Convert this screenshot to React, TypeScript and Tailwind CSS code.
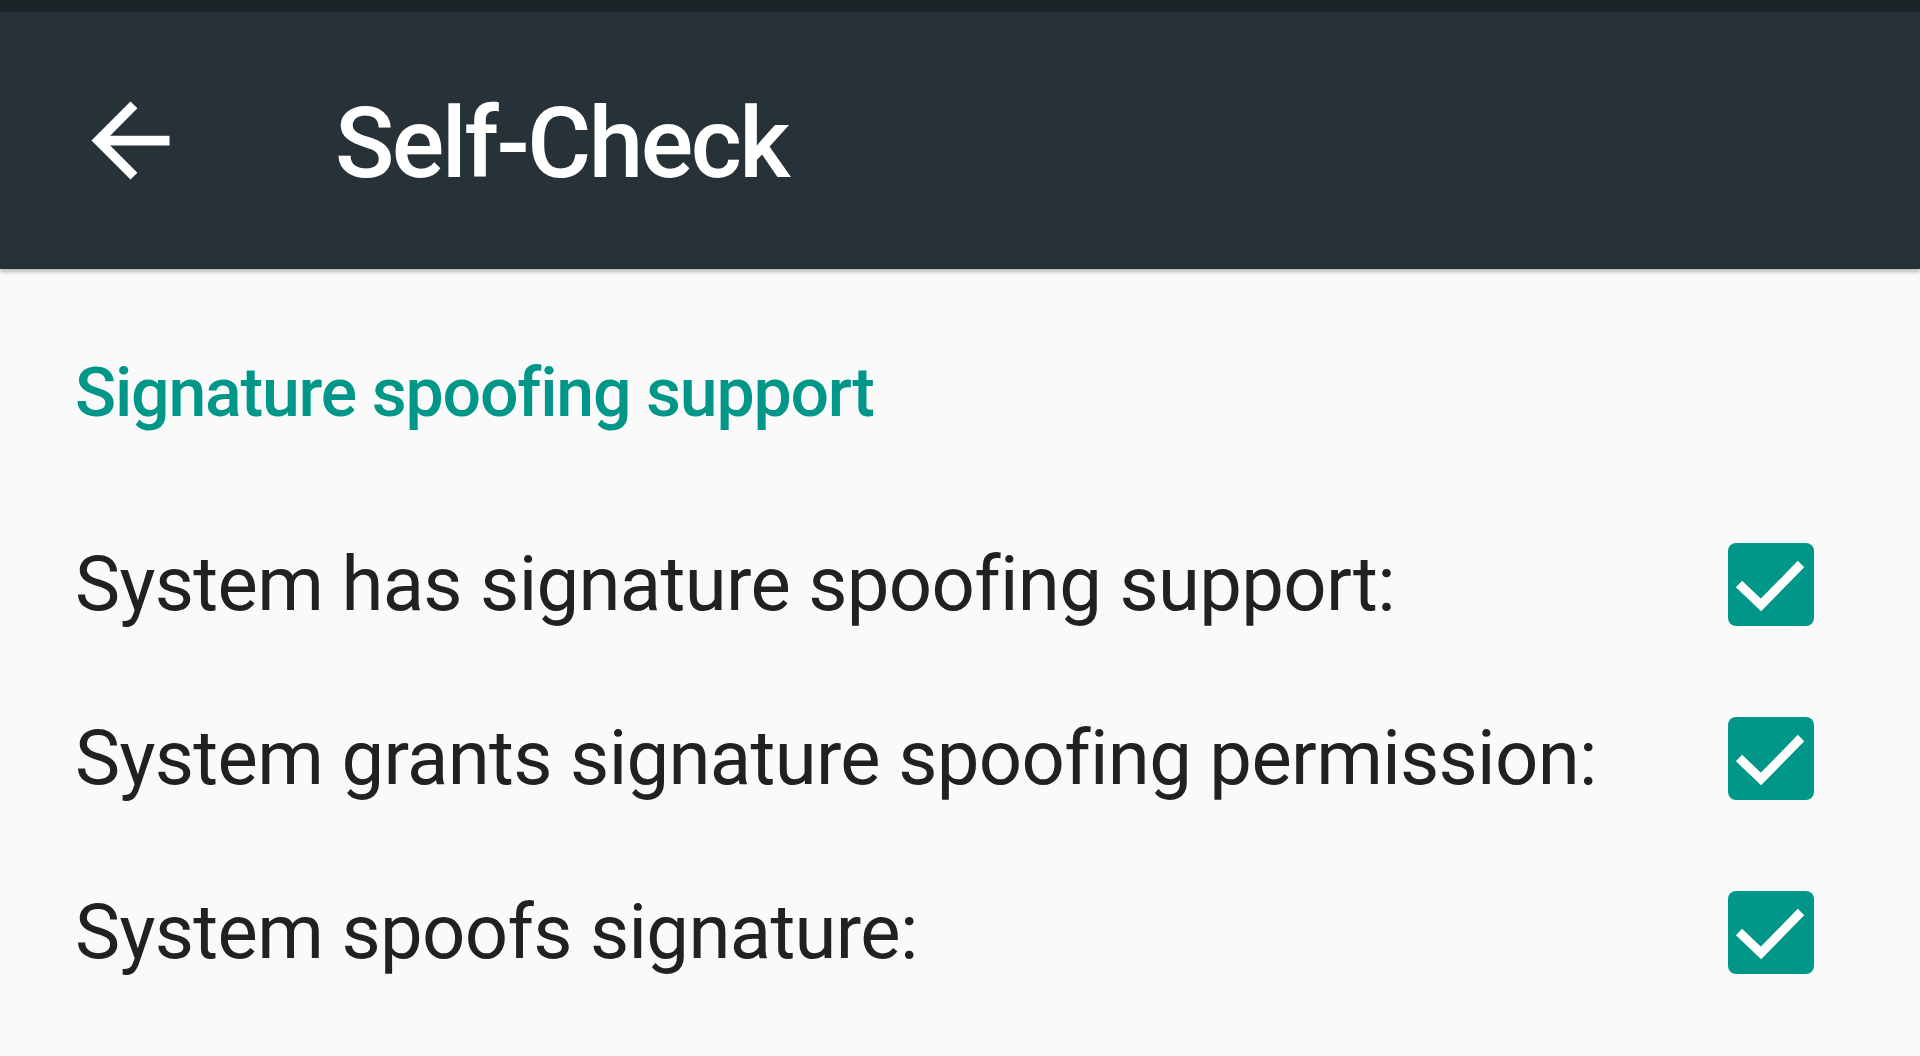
import React from "react";

const rows = [
    "System has signature spoofing support:",
    "System grants signature spoofing permission:",
    "System spoofs signature:",
];

const CheckBox = () => (
    <div className="w-[86px] h-[83px] rounded-[8px] bg-[#009688] flex items-center justify-center shrink-0">
        <svg width="86" height="83" viewBox="0 0 86 83">
            <path
                d="M11 41 L33 62 L73 21"
                fill="none"
                stroke="#ffffff"
                strokeWidth="9"
            />
        </svg>
    </div>
);

const App = () => {
    return (
        <div className="w-screen h-screen bg-[#fafafa] font-['Roboto',sans-serif] overflow-hidden">
            <div className="h-[12px] bg-[#1d2427]" />
            <div className="h-[257px] bg-[#263238] flex items-center shadow-[0_3px_4px_rgba(0,0,0,0.25)]">
                <svg
                    className="ml-[72px] shrink-0"
                    width="117"
                    height="117"
                    viewBox="0 0 24 24"
                    fill="#ffffff"
                >
                    <path d="M20 11H7.83l5.59-5.59L12 4l-8 8 8 8 1.41-1.41L7.83 13H20v-2z" />
                </svg>
                <h1 className="ml-[146px] mt-[6px] text-[98px] leading-none font-medium tracking-[-2.5px] text-white">
                    Self-Check
                </h1>
            </div>
            <div className="pt-[90px] pl-[75px] pr-[106px]">
                <h2 className="text-[68px] leading-none font-medium tracking-[-1.2px] text-[#009688]">
                    Signature spoofing support
                </h2>
                <div className="mt-[70px] flex flex-col">
                    {rows.map((r) => (
                        <div
                            key={r}
                            className="h-[174px] flex items-center justify-between"
                        >
                            <span className="text-[76px] leading-none tracking-[-0.65px] text-[#212121]">
                                {r}
                            </span>
                            <CheckBox />
                        </div>
                    ))}
                </div>
            </div>
        </div>
    );
};

export default App;
